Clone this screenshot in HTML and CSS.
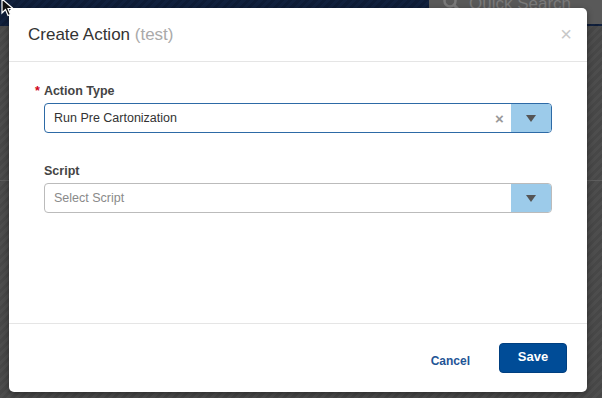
FILE: index.html
```html
<!DOCTYPE html>
<html>
  <head>
    <title>Create Action</title>
    <link rel="stylesheet" href="styles.css">
  </head>
  <body>
    <div class="page">
      <div class="topbar">
        <div class="quick-search">
          <svg width="18" height="18" viewBox="0 0 18 18"><circle cx="7" cy="7" r="5.5" fill="none" stroke="#7a7a7a" stroke-width="2.5"/><line x1="11" y1="11" x2="16" y2="16" stroke="#7a7a7a" stroke-width="3"/></svg>
          <span>Quick Search</span>
        </div>
      </div>
      <div class="page-content">
        <div class="page-rule"></div>
      </div>
    </div>

    <div class="modal">
      <div class="modal-header">
        <h3 class="modal-title">Create Action <span class="subtitle">(test)</span></h3>
        <span class="close">&times;</span>
      </div>
      <div class="modal-body">
        <div class="field">
          <label class="field-label"><span class="required">*</span>Action Type</label>
          <div class="select focused">
            <span class="select-value">Run Pre Cartonization</span>
            <span class="select-clear">&times;</span>
            <span class="select-arrow"><i class="caret"></i></span>
          </div>
        </div>
        <div class="field">
          <label class="field-label">Script</label>
          <div class="select">
            <span class="select-value placeholder">Select Script</span>
            <span class="select-arrow"><i class="caret"></i></span>
          </div>
        </div>
      </div>
      <div class="modal-footer">
        <a class="btn-link">Cancel</a>
        <button class="btn-primary">Save</button>
      </div>
    </div>

    <svg class="cursor" width="14" height="20" viewBox="0 0 14 20"><path d="M1 1 L1 15 L4.5 11.5 L7 17.5 L9.5 16.5 L7 10.5 L12 10.5 Z" fill="#111" stroke="#fff" stroke-width="1.2"/></svg>
  </body>
</html>
```

FILE: styles.css
```css
body {
  margin: 0;
  font-family: "Liberation Sans", Arial, sans-serif;
  background: #484848;
  overflow: hidden;
}
.page {
  height: 398px;
  display: flex;
  flex-direction: column;
}
.topbar {
  height: 26px;
  background: repeating-linear-gradient(135deg, #0e1c36 0 3px, #11213e 3px 6px);
  display: flex;
  justify-content: flex-end;
}
.quick-search {
  width: 173px;
  height: 24px;
  background: #595959;
  border-bottom-left-radius: 4px;
  display: flex;
  align-items: flex-start;
  gap: 8px;
  padding-left: 14px;
  box-sizing: border-box;
  overflow: hidden;
}
.quick-search svg {
  margin-top: -6px;
}
.quick-search span {
  color: #7a7a7a;
  font-size: 17px;
  margin-top: -6px;
}
.page-content {
  flex: 1;
  background: repeating-linear-gradient(135deg, #474747 0 3px, #4d4d4d 3px 6px);
  display: flex;
  flex-direction: column;
}
.page-rule {
  margin-top: 154px;
  height: 1px;
  background: #5e5e5e;
}

.modal {
  position: absolute;
  left: 9px;
  top: 8px;
  width: 578px;
  height: 384px;
  background: #fff;
  border-radius: 5px;
  box-shadow: 0 2px 6px rgba(0, 0, 0, 0.4);
  display: flex;
  flex-direction: column;
}
.modal-header {
  height: 53px;
  border-bottom: 1px solid #e5e5e5;
  display: flex;
  align-items: center;
  justify-content: space-between;
  padding: 0 15px 0 19px;
}
.modal-title {
  margin: 0;
  font-size: 17px;
  font-weight: normal;
  color: #333;
}
.subtitle {
  color: #aaa;
}
.close {
  font-size: 20px;
  color: #c8c8c8;
}
.modal-body {
  flex: 1;
  padding: 22px 35px 0;
  display: flex;
  flex-direction: column;
  gap: 31px;
}
.field {
  display: flex;
  flex-direction: column;
  gap: 4px;
}
.field-label {
  font-size: 12.5px;
  font-weight: bold;
  color: #444;
  height: 15px;
}
.required {
  color: #d0021b;
  margin-left: -9px;
  margin-right: 4px;
}
.select {
  height: 28px;
  border: 1px solid #bbb;
  border-radius: 4px;
  display: flex;
  align-items: center;
  overflow: hidden;
}
.select.focused {
  border-color: #2d6aa6;
}
.select-value {
  flex: 1;
  font-size: 12.5px;
  color: #333;
  padding-left: 9px;
}
.placeholder {
  color: #8a8a8a;
}
.select-clear {
  color: #999;
  font-size: 15px;
  font-weight: bold;
  width: 16px;
}
.select-arrow {
  width: 40px;
  height: 100%;
  background: #9ccbea;
  display: flex;
  align-items: center;
  justify-content: center;
}
.caret {
  width: 0;
  height: 0;
  border-left: 5.5px solid transparent;
  border-right: 5.5px solid transparent;
  border-top: 7px solid #555;
}
.modal-footer {
  height: 68px;
  border-top: 1px solid #e5e5e5;
  display: flex;
  align-items: center;
  justify-content: flex-end;
  gap: 29px;
  padding-right: 20px;
}
.btn-link {
  font-size: 12px;
  font-weight: bold;
  color: #1f5596;
  margin-top: 6px;
}
.btn-primary {
  width: 68px;
  height: 30px;
  background: #004c97;
  color: #fff;
  border: 1px solid #003f80;
  border-radius: 4px;
  font-family: inherit;
  font-size: 13px;
  font-weight: bold;
  padding: 0 0 3px;
}
.cursor {
  position: absolute;
  left: 1px;
  top: -2px;
}
```
